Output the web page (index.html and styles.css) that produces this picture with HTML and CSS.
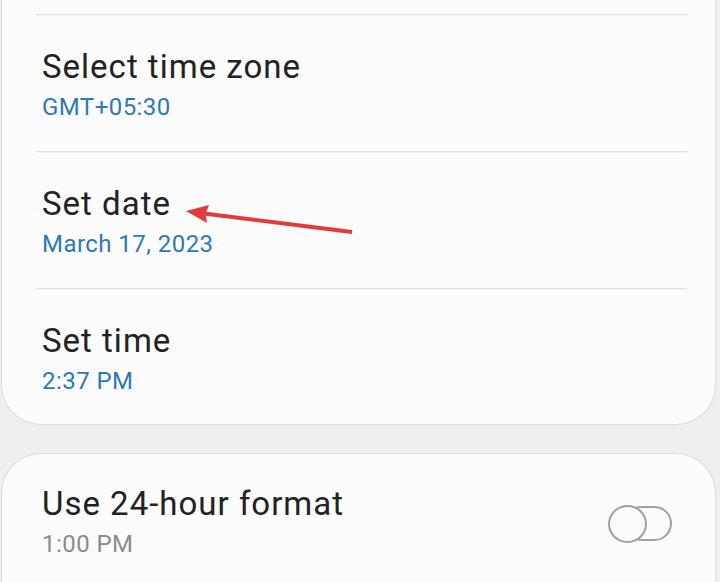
FILE: index.html
```html
<!DOCTYPE html>
<html>
<head>
<meta charset="utf-8">
<link rel="stylesheet" href="styles.css">
</head>
<body>
<div class="page">
  <section class="card card-top">
    <div class="row">
      <div class="title">Select time zone</div>
      <div class="sub">GMT+05:30</div>
    </div>
    <div class="row">
      <div class="title">Set date</div>
      <div class="sub">March 17, 2023</div>
    </div>
    <div class="row row-last">
      <div class="title">Set time</div>
      <div class="sub">2:37 PM</div>
    </div>
  </section>
  <section class="card card-bottom">
    <div class="row-toggle">
      <div class="texts">
        <div class="title">Use 24-hour format</div>
        <div class="sub sub-gray">1:00 PM</div>
      </div>
      <div class="switch"><span class="knob"></span></div>
    </div>
  </section>
  <svg class="arrow" width="190" height="40" viewBox="0 0 190 40" xmlns="http://www.w3.org/2000/svg">
    <line x1="172" y1="32" x2="24" y2="13.5" stroke="#e23b3b" stroke-width="4" stroke-linecap="butt"/>
    <polygon points="6,11 29,5 25.5,14 27,23" fill="#e23b3b"/>
  </svg>
</div>
</body>
</html>
```
FILE: styles.css
```css
html, body {
  margin: 0;
  padding: 0;
}
body {
  background: #efefef;
  font-family: Roboto, "Noto Sans", sans-serif;
  width: 720px;
  height: 582px;
  overflow: hidden;
}
.page {
  position: relative;
  padding: 0 4px 0 1px;
}
.card {
  background: #fcfcfc;
  border: 1px solid #dcdcdc;
}
.card-top {
  border-top: none;
  border-radius: 0 0 40px 40px;
  padding-top: 14px;
  padding-bottom: 27px;
}
.row {
  border-top: 1px solid #e0e0e0;
  margin: 0 28px 0 34px;
  padding: 32px 0 28px 6px;
  box-shadow: inset 0 1px 0 #f4f4f4;
}
.row-last {
  padding-bottom: 0;
}
.title {
  font-size: 33px;
  line-height: 40px;
  letter-spacing: 1px;
  color: #222222;
}
.sub {
  font-size: 24px;
  line-height: 32px;
  letter-spacing: 0.45px;
  margin-top: 4px;
  color: #2f78b4;
}
.sub-gray {
  color: #8c8c8c;
}
.card-bottom {
  margin-top: 28px;
  border-radius: 40px 40px 0 0;
  border-bottom: none;
  height: 140px;
}
.row-toggle {
  display: flex;
  align-items: center;
  justify-content: space-between;
  padding: 30px 43px 0 40px;
}
.switch {
  position: relative;
  width: 64px;
  height: 38px;
  margin-top: 4px;
}
.switch::before {
  content: "";
  position: absolute;
  left: 16px;
  right: 0;
  top: 1px;
  bottom: 2px;
  border: 2px solid #a0a0a0;
  border-radius: 18px;
  box-sizing: border-box;
}
.knob {
  position: absolute;
  left: 0;
  top: 0;
  width: 39px;
  height: 38px;
  border: 2px solid #a0a0a0;
  border-radius: 50%;
  background: #fcfcfc;
  box-sizing: border-box;
}
.arrow {
  position: absolute;
  left: 180px;
  top: 200px;
}
```
